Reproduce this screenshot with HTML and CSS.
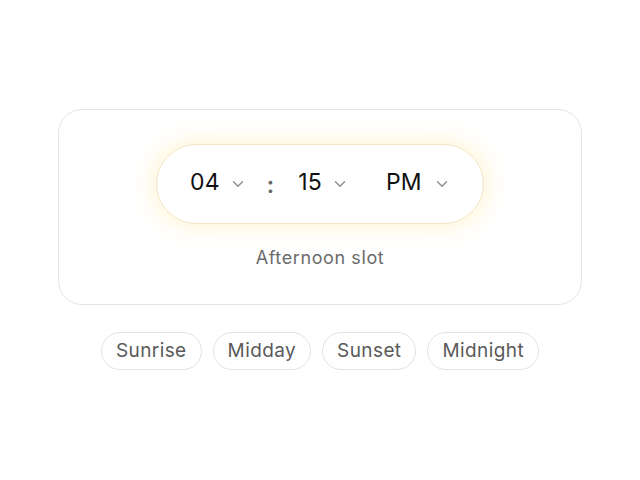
FILE: index.html
```html
<!DOCTYPE html>
<html>
<head>
<meta charset="utf-8">
<link rel="stylesheet" href="styles.css">
</head>
<body>
<main class="page">
  <section class="card">
    <div class="pill">
      <div class="seg seg-hour">
        <span class="val">04</span>
        <svg class="chev" viewBox="0 0 12 8"><path d="M1.5 1.8 L6 6.2 L10.5 1.8"/></svg>
      </div>
      <span class="colon">:</span>
      <div class="seg seg-min">
        <span class="val">15</span>
        <svg class="chev" viewBox="0 0 12 8"><path d="M1.5 1.8 L6 6.2 L10.5 1.8"/></svg>
      </div>
      <div class="seg seg-ampm">
        <span class="val">PM</span>
        <svg class="chev" viewBox="0 0 12 8"><path d="M1.5 1.8 L6 6.2 L10.5 1.8"/></svg>
      </div>
    </div>
    <p class="label">Afternoon slot</p>
  </section>
  <div class="chips">
    <button class="chip">Sunrise</button>
    <button class="chip">Midday</button>
    <button class="chip">Sunset</button>
    <button class="chip">Midnight</button>
  </div>
</main>
</body>
</html>
```

FILE: styles.css
```css
* { box-sizing: border-box; }
html, body { margin: 0; padding: 0; background: #ffffff; }
body {
  font-family: Inter, "Noto Sans", "Liberation Sans", sans-serif;
  width: 640px;
  height: 480px;
}
.page {
  display: flex;
  flex-direction: column;
  align-items: center;
  padding-top: 109px;
}
.card {
  width: 524px;
  height: 196px;
  border: 1px solid #e4e4e4;
  border-radius: 24px;
  display: flex;
  flex-direction: column;
  align-items: center;
  padding-top: 34px;
  background: #fff;
}
.pill {
  width: 328px;
  height: 80px;
  border-radius: 40px;
  border: 1px solid #f1e7c4;
  background: #fff;
  box-shadow: 0 0 22px 4px rgba(252, 226, 140, 0.35);
  display: flex;
  align-items: center;
  padding-left: 33px;
  padding-bottom: 4px;
}
.seg {
  display: flex;
  align-items: center;
}
.val {
  font-size: 23px;
  color: #111;
  letter-spacing: 0.2px;
}
.chev {
  width: 12px;
  height: 8px;
  margin-left: 12px;
  margin-top: 4px;
  fill: none;
  stroke: #8a8a8a;
  stroke-width: 1.3;
  stroke-linecap: round;
  stroke-linejoin: round;
}
.colon {
  font-size: 23px;
  color: #666;
  margin-left: 23px;
  margin-top: 5px;
  font-weight: 600;
}
.seg-min { margin-left: 24px; }
.seg-ampm { margin-left: 40px; }
.seg-ampm .chev { margin-left: 14px; }
.label {
  margin: 21px 0 0;
  font-size: 18px;
  letter-spacing: 0.6px;
  line-height: 26px;
  color: #6b6b6b;
}
.chips {
  display: flex;
  gap: 11px;
  margin-top: 27px;
}
.chip {
  font-family: inherit;
  font-size: 19px;
  letter-spacing: 0.4px;
  color: #5a5a5a;
  background: #fff;
  border: 1px solid #e2e2e2;
  border-radius: 19px;
  height: 38px;
  padding: 0 14px;
  line-height: 36px;
}
```
